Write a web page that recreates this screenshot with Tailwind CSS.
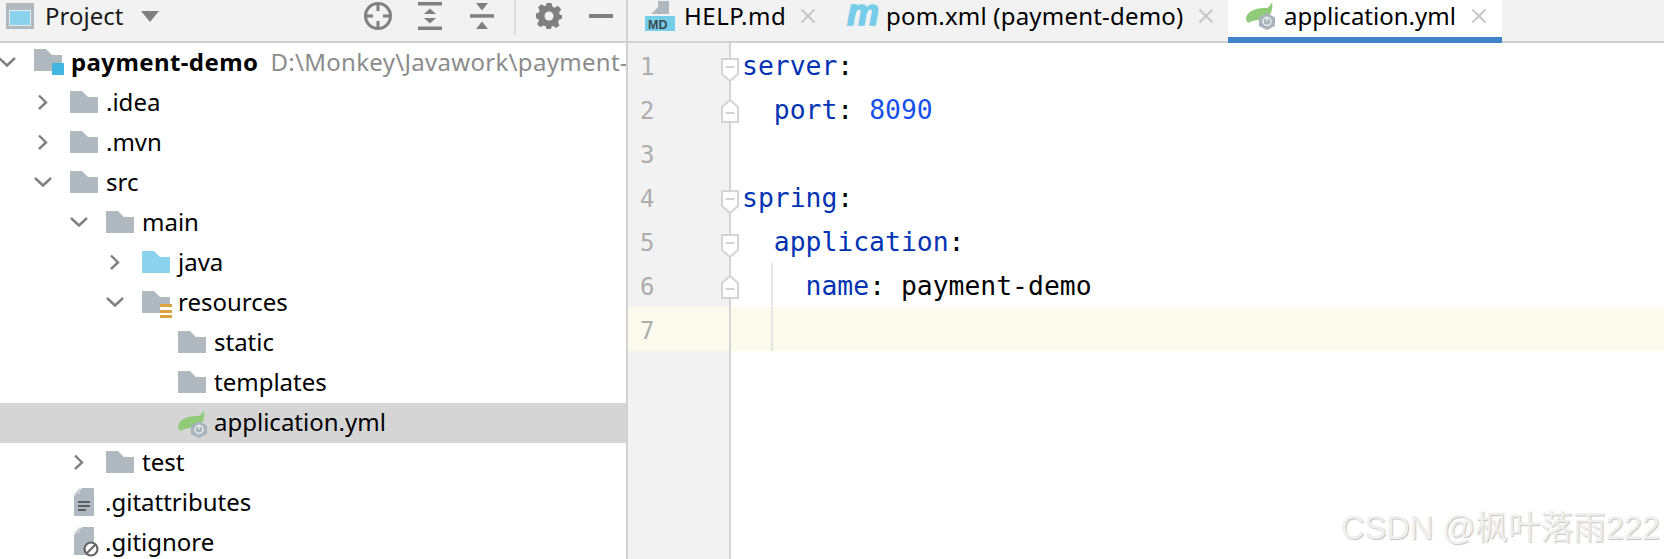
<!DOCTYPE html>
<html>
<head>
<meta charset="utf-8">
<script src="https://cdn.jsdelivr.net/npm/@tailwindcss/browser@4"></script>
</head>
<body class="m-0 bg-white overflow-hidden">
<svg class="hidden">
  <symbol id="folder" viewBox="0 0 28 22"><path d="M0 0H12L18 6H28V22H0Z" fill="#b0b9bf"/></symbol>
  <symbol id="folderblue" viewBox="0 0 28 22"><path d="M0 0H12L18 6H28V22H0Z" fill="#8bd2ee"/></symbol>
  <symbol id="right" viewBox="0 0 18 18"><path d="M5 2.500L12 9.500L5 16" fill="none" stroke="#808080" stroke-width="2.400"/></symbol>
  <symbol id="down" viewBox="0 0 18 18"><path d="M1 5L9 12.500L17 5" fill="none" stroke="#808080" stroke-width="2.400"/></symbol>
  <symbol id="spring" viewBox="0 0 30 28">
    <path d="M26 0C25 3 23 5 21 6C13 6 2 7 0 16C0 18 1 20 2 21C5 19 9 18 14 18L24 13C26 9 27 4 26 0Z" fill="#8fcb78"/>
    <path d="M21 11L29 15.500V24L21 28L13 24V15.500Z" fill="#a8b3bb"/>
    <circle cx="21" cy="19.500" r="4" fill="none" stroke="#eef1f2" stroke-width="1.400"/>
    <path d="M21 15.500V19.500" stroke="#eef1f2" stroke-width="1.400"/>
  </symbol>
  <symbol id="foldtop" viewBox="0 0 18 24"><path d="M1 1H17V16L9 23L1 16Z" fill="#fff" stroke="#d4d4d4" stroke-width="2"/><path d="M4.500 9H13.500" stroke="#d4d4d4" stroke-width="2"/></symbol>
  <symbol id="foldbot" viewBox="0 0 18 24"><path d="M1 23H17V8L9 1L1 8Z" fill="#fff" stroke="#d4d4d4" stroke-width="2"/><path d="M4.500 14H13.500" stroke="#d4d4d4" stroke-width="2"/></symbol>
  <symbol id="close" viewBox="0 0 16 16"><path d="M1.500 1.500L14.500 14.500M14.500 1.500L1.500 14.500" stroke="#c7c9cb" stroke-width="2.200" fill="none"/></symbol>
</svg>

<div class="relative flex h-[559px] w-[1664px] overflow-hidden bg-white text-black font-['Noto_Sans',sans-serif]">

  <!-- Project panel -->
  <aside class="flex h-full w-[628px] shrink-0 flex-col border-r-2 border-[#d1d1d1]">
    <header class="flex h-[43px] shrink-0 items-center border-b-2 border-[#d1d1d1] bg-[#f2f2f2] pb-[9px] text-[#808080]">
      <svg class="ml-[6px] shrink-0" width="28" height="26" viewBox="0 0 28 26"><rect width="28" height="26" fill="#b0b9bf"/><rect x="3" y="7" width="22" height="16" fill="#e8ecee"/><rect x="4" y="8" width="20" height="14" fill="#8bd2ee"/></svg>
      <span class="ml-[11px] w-[96px] text-[24px] leading-none text-[#1a1a1a]">Project</span>
      <svg class="shrink-0" width="18" height="11" viewBox="0 0 18 11"><path d="M0 0H18L9 11Z" fill="#808080"/></svg>
      <svg class="ml-[205px] shrink-0" width="28" height="28" viewBox="0 0 28 28" fill="none" stroke="#808080" stroke-width="3"><circle cx="14" cy="14" r="12.500"/><path d="M14 1.500V9M14 19V26.500M1.500 14H9M19 14H26.500"/></svg>
      <svg class="ml-[26px] shrink-0" width="24" height="28" viewBox="0 0 24 28" fill="#808080"><rect width="24" height="3.500" y="0"/><rect width="24" height="3.500" y="24.500"/><path d="M12 6.500L18 12H6ZM12 21.500L18 16H6Z"/></svg>
      <svg class="ml-[28px] shrink-0" width="24" height="26" viewBox="0 0 24 26" fill="#808080"><rect width="24" height="3.500" y="11.200"/><path d="M6 0H18L12 7.500ZM6 26H18L12 18.500Z"/></svg>
      <div class="ml-[20px] h-[35px] w-[2px] shrink-0 self-start bg-[#dcdcdc]"></div>
      <svg class="ml-[20px] shrink-0" width="26" height="26" viewBox="0 0 26 26"><path d="M10.500 0H15.500L16.300 3.600L18.800 4.700L22 2.800L25.200 6.500L23 9.400L24 12H26V15.500L23 16.700L22 19.200L23.600 22.500L20 25L17.300 23L15.500 23.500L15 26H10.500L9.700 23.200L7.500 22.400L4.300 24.300L1 21L3 18L2.200 16L0 15.200V10.500L3 9.600L3.700 7.500L2 4.200L5.500 1.200L8.300 3L10 2.500Z" fill="#808080"/><circle cx="13" cy="13" r="4.500" fill="#f2f2f2"/></svg>
      <div class="ml-[27px] h-[3.500px] w-[24px] shrink-0 bg-[#808080]"></div>
    </header>

    <nav class="flex-1 overflow-hidden text-[24px] leading-none">
      <div class="flex h-10 items-center overflow-hidden whitespace-nowrap pb-[2px]"><svg class="-ml-[2px] mr-[18px] shrink-0" width="18" height="18"><use href="#down"/></svg><span class="relative mr-[9px] h-[26px] w-[28px] shrink-0"><svg class="block" width="28" height="22"><use href="#folder"/></svg><span class="absolute right-[-2px] bottom-0 h-[12px] w-[12px] bg-[#40b6e0]"></span></span><b class="font-bold tracking-[0.4px]">payment-demo</b><span class="ml-[12px] tracking-[0.3px] text-[#8c8c8c]">D:\Monkey\Javawork\payment-demo</span></div>
      <div class="flex h-10 items-center pb-[2px] pl-[34px]"><svg class="mr-[18px] shrink-0" width="18" height="18"><use href="#right"/></svg><svg class="mr-[8px] shrink-0" width="28" height="22"><use href="#folder"/></svg><span>.idea</span></div>
      <div class="flex h-10 items-center pb-[2px] pl-[34px]"><svg class="mr-[18px] shrink-0" width="18" height="18"><use href="#right"/></svg><svg class="mr-[8px] shrink-0" width="28" height="22"><use href="#folder"/></svg><span>.mvn</span></div>
      <div class="flex h-10 items-center pb-[2px] pl-[34px]"><svg class="mr-[18px] shrink-0" width="18" height="18"><use href="#down"/></svg><svg class="mr-[8px] shrink-0" width="28" height="22"><use href="#folder"/></svg><span>src</span></div>
      <div class="flex h-10 items-center pb-[2px] pl-[70px]"><svg class="mr-[18px] shrink-0" width="18" height="18"><use href="#down"/></svg><svg class="mr-[8px] shrink-0" width="28" height="22"><use href="#folder"/></svg><span>main</span></div>
      <div class="flex h-10 items-center pb-[2px] pl-[106px]"><svg class="mr-[18px] shrink-0" width="18" height="18"><use href="#right"/></svg><svg class="mr-[8px] shrink-0" width="28" height="22"><use href="#folderblue"/></svg><span>java</span></div>
      <div class="flex h-10 items-center pb-[2px] pl-[106px]"><svg class="mr-[18px] shrink-0" width="18" height="18"><use href="#down"/></svg><span class="relative mr-[8px] h-[22px] w-[28px] shrink-0"><svg class="block" width="28" height="22"><use href="#folder"/></svg><span class="absolute right-[-2px] top-[13px] flex h-[14px] w-[12px] flex-col justify-between bg-white"><i class="block h-[3px] bg-[#dba33f]"></i><i class="block h-[3px] bg-[#dba33f]"></i><i class="block h-[3px] bg-[#dba33f]"></i></span></span><span>resources</span></div>
      <div class="flex h-10 items-center pb-[2px] pl-[178px]"><svg class="mr-[8px] shrink-0" width="28" height="22"><use href="#folder"/></svg><span>static</span></div>
      <div class="flex h-10 items-center pb-[2px] pl-[178px]"><svg class="mr-[8px] shrink-0" width="28" height="22"><use href="#folder"/></svg><span>templates</span></div>
      <div class="flex h-10 items-center bg-[#d5d5d5] pb-[2px] pl-[178px]"><svg class="mr-[8px] mt-[3px] shrink-0" width="30" height="28"><use href="#spring"/></svg><span class="-ml-[2px]">application.yml</span></div>
      <div class="flex h-10 items-center pb-[2px] pl-[70px]"><svg class="mr-[18px] shrink-0" width="18" height="18"><use href="#right"/></svg><svg class="mr-[8px] shrink-0" width="28" height="22"><use href="#folder"/></svg><span>test</span></div>
      <div class="flex h-10 items-center pb-[2px] pl-[74px]">
        <svg class="mr-[11px] shrink-0" width="20" height="28" viewBox="0 0 20 28"><path d="M8 0H20V28H0V8Z" fill="#b0b9bf"/><path d="M0 6L6 0V6Z" fill="#c9ced2"/><path d="M4 14H16M4 18H16M4 22H12" stroke="#5a5f63" stroke-width="2"/></svg>
        <span>.gitattributes</span></div>
      <div class="flex h-10 items-center pb-[2px] pl-[74px]">
        <svg class="mr-[11px] shrink-0" width="26" height="30" viewBox="0 0 26 30"><path d="M8 0H20V28H0V8Z" fill="#b0b9bf"/><path d="M0 6L6 0V6Z" fill="#c9ced2"/><circle cx="17" cy="22" r="6.500" fill="#fff" stroke="#666" stroke-width="2.200"/><path d="M12.500 26.500L21.500 17.500" stroke="#666" stroke-width="2.200"/></svg>
        <span class="-ml-[6px]">.gitignore</span></div>
    </nav>
  </aside>

  <!-- Editor -->
  <main class="flex h-full flex-1 flex-col">
    <div class="flex h-[43px] shrink-0 items-stretch border-b-2 border-[#d1d1d1] bg-[#f2f2f2] text-[24px] leading-none">
      <div class="flex w-[200px] items-center pb-[9px] pl-[17px]">
        <svg class="mr-[9px] shrink-0" width="30" height="30" viewBox="0 0 30 30"><path d="M13 0H24V13H13Z M6 13L13 6V13Z" fill="#b0b9bf"/><rect y="15" width="30" height="15" fill="#76cdea"/><text x="3" y="27.500" font-family="Liberation Sans" font-weight="700" font-size="12.500" fill="#3d4a52">MD</text></svg>
        <span class="tracking-[0.5px]">HELP.md</span>
        <svg class="ml-[14px] shrink-0" width="16" height="16"><use href="#close"/></svg>
      </div>
      <div class="flex w-[400px] items-center pb-[9px] pl-[19px]">
        <span class="mr-[8px] w-[31px] font-['Liberation_Sans',sans-serif] text-[36px] leading-none font-bold italic text-[#76cdea] [-webkit-text-stroke:1.5px_#76cdea] -translate-y-[3px]">m</span>
        <span class="whitespace-nowrap tracking-[0.2px]">pom.xml (payment-demo)</span>
        <svg class="ml-[15px] shrink-0" width="16" height="16"><use href="#close"/></svg>
      </div>
      <div class="relative -mb-[2px] flex w-[274px] items-center border-b-[6px] border-[#4083c9] bg-white pb-[5px] pl-[18px]">
        <svg class="mr-[8px] shrink-0" width="30" height="28"><use href="#spring"/></svg>
        <span>application.yml</span>
        <svg class="ml-[15px] shrink-0" width="16" height="16"><use href="#close"/></svg>
      </div>
    </div>

    <div class="relative flex flex-1 flex-col font-['DejaVu_Sans_Mono',monospace] text-[26.400px] leading-none">
      <div class="flex h-11 shrink-0"><div class="relative flex w-[103px] shrink-0 items-center border-r-2 border-[#d5d5d5] bg-[#f2f2f2] pl-[12px] pt-[3px] text-[24px] text-[#adadad]">1<svg class="absolute right-[-10px] top-[15px]" width="18" height="24"><use href="#foldtop"/></svg></div><div class="flex items-center pl-[11px] pt-[2px]"><span class="whitespace-pre"><span class="text-[#0033b3]">server</span>:</span></div></div>
      <div class="flex h-11 shrink-0"><div class="relative flex w-[103px] shrink-0 items-center border-r-2 border-[#d5d5d5] bg-[#f2f2f2] pl-[12px] pt-[3px] text-[24px] text-[#adadad]">2<svg class="absolute right-[-10px] top-[12px]" width="18" height="24"><use href="#foldbot"/></svg></div><div class="flex items-center pl-[11px] pt-[2px]"><span class="whitespace-pre">  <span class="text-[#0033b3]">port</span>: <span class="text-[#1750eb]">8090</span></span></div></div>
      <div class="flex h-11 shrink-0"><div class="flex w-[103px] shrink-0 items-center border-r-2 border-[#d5d5d5] bg-[#f2f2f2] pl-[12px] pt-[3px] text-[24px] text-[#adadad]">3</div></div>
      <div class="flex h-11 shrink-0"><div class="relative flex w-[103px] shrink-0 items-center border-r-2 border-[#d5d5d5] bg-[#f2f2f2] pl-[12px] pt-[3px] text-[24px] text-[#adadad]">4<svg class="absolute right-[-10px] top-[15px]" width="18" height="24"><use href="#foldtop"/></svg></div><div class="flex items-center pl-[11px] pt-[2px]"><span class="whitespace-pre"><span class="text-[#0033b3]">spring</span>:</span></div></div>
      <div class="flex h-11 shrink-0"><div class="relative flex w-[103px] shrink-0 items-center border-r-2 border-[#d5d5d5] bg-[#f2f2f2] pl-[12px] pt-[3px] text-[24px] text-[#adadad]">5<svg class="absolute right-[-10px] top-[15px]" width="18" height="24"><use href="#foldtop"/></svg></div><div class="flex items-center pl-[11px] pt-[2px]"><span class="whitespace-pre">  <span class="text-[#0033b3]">application</span>:</span></div></div>
      <div class="flex h-11 shrink-0"><div class="relative flex w-[103px] shrink-0 items-center border-r-2 border-[#d5d5d5] bg-[#f2f2f2] pl-[12px] pt-[3px] text-[24px] text-[#adadad]">6<svg class="absolute right-[-10px] top-[12px]" width="18" height="24"><use href="#foldbot"/></svg></div><div class="flex items-center pl-[11px] pt-[2px]"><span class="whitespace-pre">    <span class="text-[#0033b3]">name</span>: payment-demo</span></div></div>
      <div class="flex h-11 shrink-0 bg-[#fcfaed]"><div class="flex w-[103px] shrink-0 items-center border-r-2 border-[#d5d5d5] pl-[12px] pt-[3px] text-[24px] text-[#adadad]">7</div></div>
      <div class="flex flex-1"><div class="w-[103px] shrink-0 border-r-2 border-[#d5d5d5] bg-[#f2f2f2]"></div></div>
      <div class="absolute left-[143px] top-[220px] h-[88px] w-[2px] bg-[#e6e6e6]"></div>
    </div>
  </main>

  <div class="absolute right-[4px] bottom-[14px] font-['Liberation_Sans','Noto_Sans_CJK_SC',sans-serif] text-[32.600px] leading-none text-[#efefef] [text-shadow:1px_1px_1px_#c4c4c4]">CSDN @枫叶落雨222</div>
</div>
</body>
</html>
